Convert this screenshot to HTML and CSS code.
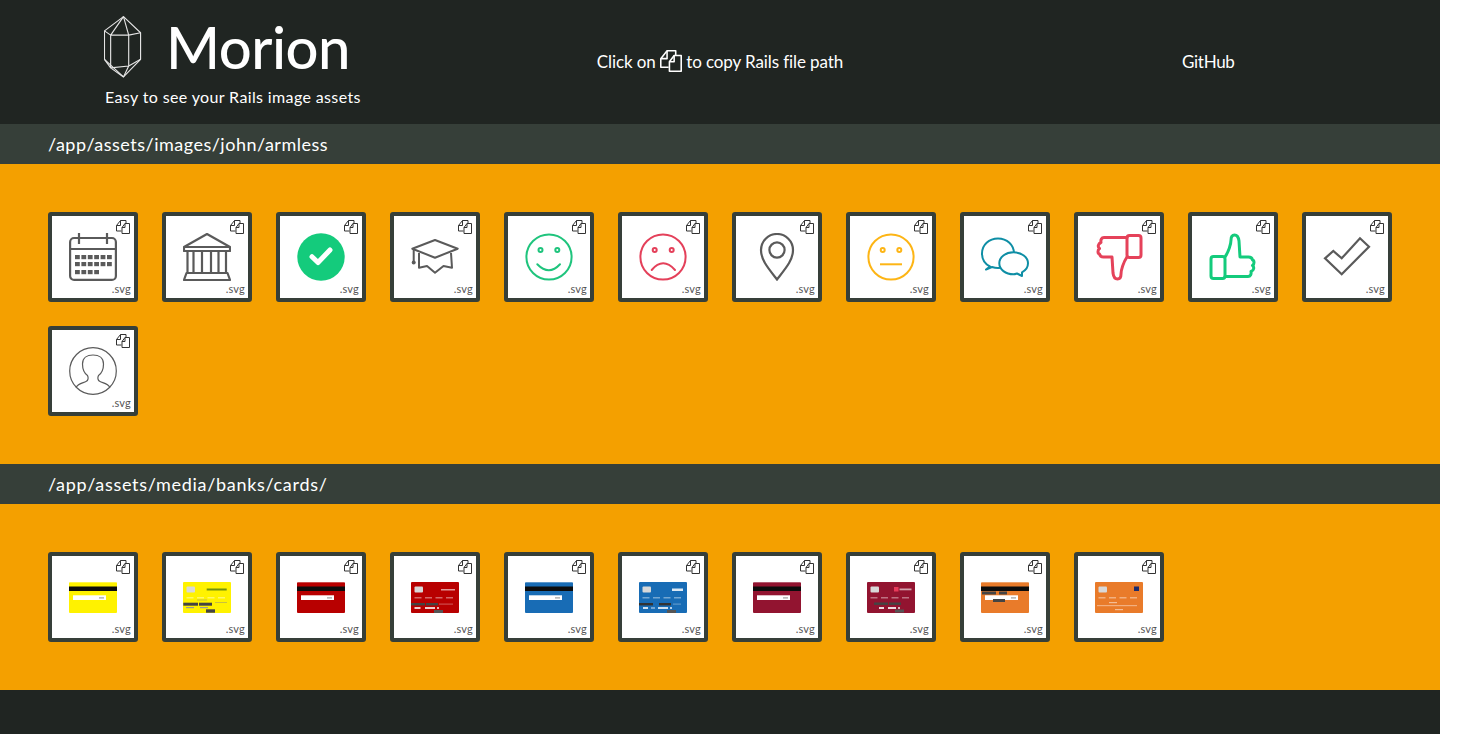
FILE: index.html
```html
<!DOCTYPE html>
<html lang="en">
<head>
<meta charset="utf-8">
<title>Morion</title>
<link rel="stylesheet" href="styles.css">
</head>
<body>
<svg class="sprite" xmlns="http://www.w3.org/2000/svg">
  <symbol id="i-copy" viewBox="0 0 14 14">
    <g fill="none" stroke="currentColor" stroke-width="1" stroke-linejoin="round">
      <path d="M5.5 11H.5V5.5L4.5.5H10V3.5"/>
      <path d="M4.5.5V5.5H.5"/>
      <path d="M6 7.5L9 3.5H13.5V13.5H6Z"/>
      <path d="M9 3.5V7.5H6"/>
    </g>
  </symbol>
  <symbol id="i-cal" viewBox="0 0 48 48">
    <g fill="none" stroke="#5a5a5a" stroke-width="2.2">
      <rect x="1.100" y="5" width="45.800" height="41.900" rx="4"/>
      <path d="M1 16H47M10 0V11M38 0V11"/>
    </g>
    <g fill="#5a5a5a">
      <rect x="6" y="22" width="4.800" height="4.200"/><rect x="12.400" y="22" width="4.800" height="4.200"/><rect x="18.800" y="22" width="4.800" height="4.200"/><rect x="25.200" y="22" width="4.800" height="4.200"/><rect x="31.600" y="22" width="4.800" height="4.200"/><rect x="38" y="22" width="4.800" height="4.200"/>
      <rect x="6" y="29" width="4.800" height="4.200"/><rect x="12.400" y="29" width="4.800" height="4.200"/><rect x="18.800" y="29" width="4.800" height="4.200"/><rect x="25.200" y="29" width="4.800" height="4.200"/><rect x="31.600" y="29" width="4.800" height="4.200"/><rect x="38" y="29" width="4.800" height="4.200"/>
      <rect x="6" y="37" width="4.800" height="4.200"/><rect x="12.400" y="37" width="4.800" height="4.200"/><rect x="18.800" y="37" width="4.800" height="4.200"/><rect x="25.200" y="37" width="4.800" height="4.200"/>
    </g>
  </symbol>
  <symbol id="i-bank" viewBox="0 0 48 48">
    <g fill="none" stroke="#5a5a5a" stroke-width="2.200" stroke-linejoin="round">
      <path d="M24 1L1 14V18H47V14Z"/>
      <path d="M1 14H47"/>
      <path d="M4.500 18V40M10.500 18V40M19 18V40M28 18V40M35.500 18V40M43 18V40"/>
      <path d="M3.500 40H44.500L47 47H1Z"/>
    </g>
  </symbol>
  <symbol id="i-ok" viewBox="0 0 48 48">
    <circle cx="24" cy="24" r="23.700" fill="#14cb7c"/>
    <path d="M15 23.700L21 29.500L33 17" fill="none" stroke="#fff" stroke-width="5" stroke-linecap="round" stroke-linejoin="round"/>
  </symbol>
  <symbol id="i-cap" viewBox="0 0 48 48">
    <g fill="none" stroke="#5a5a5a" stroke-width="2" stroke-linejoin="round">
      <path d="M1.300 15.700L24 7L46.700 15.700L24 24.700Z"/>
      <path d="M8 20V34.700L16 33L24 39.700L32.500 33L41 34.700L40 20"/>
      <path d="M2.700 16V29"/>
    </g>
    <circle cx="2.700" cy="29.500" r="2" fill="#5a5a5a"/>
  </symbol>
  <symbol id="i-smile" viewBox="0 0 48 48">
    <g fill="none" stroke="#1fc47d" stroke-width="2">
      <circle cx="24" cy="24" r="22.600"/>
      <circle cx="15.500" cy="17" r="2"/>
      <circle cx="32.300" cy="17" r="2"/>
      <path d="M12.300 31.300Q24 43.300 35 31.300" stroke-linecap="round"/>
    </g>
  </symbol>
  <symbol id="i-sad" viewBox="0 0 48 48">
    <g fill="none" stroke="#e4405a" stroke-width="2">
      <circle cx="24" cy="24" r="22.600"/>
      <circle cx="15.700" cy="17" r="2"/>
      <circle cx="32.700" cy="17" r="2"/>
      <path d="M12.700 37Q24 23.600 36 37" stroke-linecap="round"/>
    </g>
  </symbol>
  <symbol id="i-pin" viewBox="0 0 48 48">
    <g fill="none" stroke="#5a5a5a" stroke-width="2.200">
      <path d="M24 46.500C15 35 8 27 8 17A16 16 0 0 1 40 17C40 27 33 35 24 46.500Z"/>
      <circle cx="24" cy="17" r="7.600"/>
    </g>
  </symbol>
  <symbol id="i-neutral" viewBox="0 0 48 48">
    <g fill="none" stroke="#fdb515" stroke-width="2">
      <circle cx="24" cy="24" r="22.600"/>
      <circle cx="15.700" cy="17" r="2"/>
      <circle cx="32.300" cy="17" r="2"/>
      <path d="M13 31.300H35"/>
    </g>
  </symbol>
  <symbol id="i-chat" viewBox="0 0 48 48">
    <g fill="#fff" stroke="#0e8ea5" stroke-width="2" stroke-linejoin="round">
      <path d="M9 33.500C4 31 1 26 1 20.500C1 12 8 5.500 17 5.500S33 12 33 20.500S26 35 17 35C14.500 35 12.500 34.500 11 34L5 36.500Z"/>
      <path d="M36 40.500C34.500 41 33.500 41.300 32.500 41.300C24.500 41.300 18.300 36.500 18.300 30.300S24.500 19.300 32.500 19.300S47 24.300 47 30.300C47 34.500 44.500 37.500 41 39.300L41 43Z"/>
    </g>
  </symbol>
  <symbol id="i-down" viewBox="0 0 48 48">
    <g fill="none" stroke="#e5425a" stroke-width="3" stroke-linejoin="round" stroke-linecap="round">
      <path d="M32 4.500H9C6.500 4.500 5.500 7 6 9.500C3 10.500 2.500 14 4.500 15.500C2.500 17 2.500 20.500 4.500 21C5 23.500 6.500 24 8.500 24H17L18 40C18.500 44 20 46 22.500 46C25 46 26 44 26 41C26 37 28.500 29 32 24"/>
      <rect x="32" y="2.500" width="14" height="22" rx="2.500"/>
    </g>
  </symbol>
  <symbol id="i-up" viewBox="0 0 48 48">
    <g fill="none" stroke="#14cb7c" stroke-width="3" stroke-linejoin="round" stroke-linecap="round" transform="rotate(180 24 24)">
      <path d="M32 4.500H9C6.500 4.500 5.500 7 6 9.500C3 10.500 2.500 14 4.500 15.500C2.500 17 2.500 20.500 4.500 21C5 23.500 6.500 24 8.500 24H17L18 40C18.500 44 20 46 22.500 46C25 46 26 44 26 41C26 37 28.500 29 32 24"/>
      <rect x="32" y="2.500" width="14" height="22" rx="2.500"/>
    </g>
  </symbol>
  <symbol id="i-check" viewBox="0 0 48 48">
    <path d="M2 25.300L10.300 18L18.700 25.300L37 5.300L46 13.700L18.700 41.300Z" fill="none" stroke="#5a5a5a" stroke-width="2.200"/>
  </symbol>
  <symbol id="i-user" viewBox="0 0 48 48">
    <g fill="none" stroke="#5a5a5a" stroke-width="1.200">
      <circle cx="24" cy="24" r="23.300"/>
      <path d="M7 40.500C9 36.500 14 36 17 34.500C19.500 33.500 19.500 30.500 18.500 28.500C15 26 13.500 21 13.500 17C13.500 11 18 8 24 8C30 8 34.500 11 34.500 17C34.500 21 33 26 29.500 28.500C28.500 30.500 28.500 33.500 31 34.500C34 36 39 36.500 41 40.500"/>
    </g>
  </symbol>
  <symbol id="c-back" viewBox="0 0 48 31">
    <rect width="48" height="31" rx="1" fill="currentColor"/>
    <rect width="48" height="1" fill="#fff" opacity=".3"/>
    <rect y="4.500" width="48" height="4.500" fill="#0c0c0c"/>
    <rect x="4" y="13.300" width="33" height="4.700" fill="#fff"/>
    <rect x="30" y="15" width="5" height="1.700" fill="#bbb"/>
  </symbol>
  <symbol id="c-front" viewBox="0 0 48 31">
    <rect width="48" height="31" rx="1" fill="currentColor"/>
    <rect x="3.500" y="4.500" width="8.500" height="6" rx="1" fill="#d8d8d8"/>
    <g fill="#fff" opacity=".4">
      <rect x="3.500" y="15" width="7" height="1.500"/><rect x="14" y="15" width="7" height="1.500"/><rect x="24.500" y="15" width="7" height="1.500"/><rect x="35" y="15" width="7" height="1.500"/>
    </g>
  </symbol>
</svg>

<div class="page">
  <header class="header">
    <div class="brand">
      <div class="brand-top">
        <svg class="crystal" viewBox="0 0 40 66" xmlns="http://www.w3.org/2000/svg">
          <g fill="none" stroke="#e4e4e4" stroke-width="1.200" stroke-linejoin="round">
            <path d="M20.500 1L38.500 18V46L20.500 64.500L.5 46V16Z"/>
            <path d="M.5 16L7 20.500H26L38.500 18M7 20.500L20.500 1M26 20.500L20.500 1M7 20.500V55L20.500 64.500M26 20.500V53L20.500 64.500M.5 46L7 55L26 53L38.500 46"/>
          </g>
        </svg>
        <h1 class="title">Morion</h1>
      </div>
      <p class="tagline">Easy to see your Rails image assets</p>
    </div>
    <div class="hint">Click on <svg class="hint-icon"><use href="#i-copy"/></svg> to copy Rails file path</div>
    <a class="github">GitHub</a>
  </header>

  <section>
    <h2 class="path path-images">/app/assets/images/john/armless</h2>
    <div class="grid">
      <div class="tile"><svg class="copy"><use href="#i-copy"/></svg><svg class="icon"><use href="#i-cal"/></svg><span class="ext">.svg</span></div>
      <div class="tile"><svg class="copy"><use href="#i-copy"/></svg><svg class="icon"><use href="#i-bank"/></svg><span class="ext">.svg</span></div>
      <div class="tile"><svg class="copy"><use href="#i-copy"/></svg><svg class="icon"><use href="#i-ok"/></svg><span class="ext">.svg</span></div>
      <div class="tile"><svg class="copy"><use href="#i-copy"/></svg><svg class="icon"><use href="#i-cap"/></svg><span class="ext">.svg</span></div>
      <div class="tile"><svg class="copy"><use href="#i-copy"/></svg><svg class="icon"><use href="#i-smile"/></svg><span class="ext">.svg</span></div>
      <div class="tile"><svg class="copy"><use href="#i-copy"/></svg><svg class="icon"><use href="#i-sad"/></svg><span class="ext">.svg</span></div>
      <div class="tile"><svg class="copy"><use href="#i-copy"/></svg><svg class="icon"><use href="#i-pin"/></svg><span class="ext">.svg</span></div>
      <div class="tile"><svg class="copy"><use href="#i-copy"/></svg><svg class="icon"><use href="#i-neutral"/></svg><span class="ext">.svg</span></div>
      <div class="tile"><svg class="copy"><use href="#i-copy"/></svg><svg class="icon"><use href="#i-chat"/></svg><span class="ext">.svg</span></div>
      <div class="tile"><svg class="copy"><use href="#i-copy"/></svg><svg class="icon"><use href="#i-down"/></svg><span class="ext">.svg</span></div>
      <div class="tile"><svg class="copy"><use href="#i-copy"/></svg><svg class="icon"><use href="#i-up"/></svg><span class="ext">.svg</span></div>
      <div class="tile"><svg class="copy"><use href="#i-copy"/></svg><svg class="icon"><use href="#i-check"/></svg><span class="ext">.svg</span></div>
      <div class="tile"><svg class="copy"><use href="#i-copy"/></svg><svg class="icon"><use href="#i-user"/></svg><span class="ext">.svg</span></div>
    </div>
  </section>

  <section>
    <h2 class="path path-media">/app/assets/media/banks/cards/</h2>
    <div class="grid">
      <div class="tile"><svg class="copy"><use href="#i-copy"/></svg><svg class="card yellow" viewBox="0 0 48 31"><use href="#c-back"/></svg><span class="ext">.svg</span></div>
      <div class="tile"><svg class="copy"><use href="#i-copy"/></svg>
        <svg class="card yellow" viewBox="0 0 48 31"><use href="#c-front"/>
          <rect x="23.700" y="6.500" width="20" height="2" fill="#4f7a10" opacity=".8"/>
          <rect x="14" y="17.500" width="10" height="1" fill="#c8c040"/><rect x="32" y="20" width="12" height="1" fill="#c8c040"/>
          <rect x=".3" y="20.700" width="14.700" height="3" fill="#444"/><rect x="16" y="20.700" width="13" height="3" fill="#444"/>
          <rect x="3" y="25" width="8" height="1.200" fill="#999"/><rect x="17" y="25" width="8" height="1.200" fill="#999"/>
          <rect x="23" y="27.300" width="9" height="3.400" fill="#444"/>
        </svg><span class="ext">.svg</span></div>
      <div class="tile"><svg class="copy"><use href="#i-copy"/></svg><svg class="card red" viewBox="0 0 48 31"><use href="#c-back"/></svg><span class="ext">.svg</span></div>
      <div class="tile"><svg class="copy"><use href="#i-copy"/></svg>
        <svg class="card red" viewBox="0 0 48 31"><use href="#c-front"/>
          <rect x="30" y="7" width="14" height="1.500" fill="#fff" opacity=".6"/>
          <rect x="0" y="21" width="14" height="2.400" fill="#444"/><rect x="15" y="21" width="12" height="2.400" fill="#444"/><rect x="28" y="21.500" width="14" height="1.200" fill="#fff" opacity=".3"/>
          <rect x="3.500" y="25" width="6" height="2" fill="#fff" opacity=".8"/><rect x="14" y="25" width="10" height="2" fill="#fff" opacity=".8"/><rect x="26" y="25" width="2" height="2" fill="#fff" opacity=".7"/>
          <rect x="23" y="28" width="9" height="3" fill="#555"/>
        </svg><span class="ext">.svg</span></div>
      <div class="tile"><svg class="copy"><use href="#i-copy"/></svg><svg class="card blue" viewBox="0 0 48 31"><use href="#c-back"/></svg><span class="ext">.svg</span></div>
      <div class="tile"><svg class="copy"><use href="#i-copy"/></svg>
        <svg class="card blue" viewBox="0 0 48 31"><use href="#c-front"/>
          <rect x="33" y="6.500" width="11" height="2.500" fill="#fff" opacity=".85"/>
          <rect x="0" y="21" width="14" height="2.400" fill="#333"/><rect x="20" y="21" width="12" height="2.400" fill="#333"/><rect x="34" y="21.500" width="8" height="1.200" fill="#fff" opacity=".3"/>
          <rect x="4" y="25" width="5" height="2" fill="#fff" opacity=".8"/><rect x="12" y="25" width="4" height="2" fill="#fff" opacity=".4"/><rect x="19" y="25" width="10" height="2" fill="#fff" opacity=".8"/><rect x="31" y="25" width="2" height="2" fill="#fff" opacity=".7"/>
          <rect x="28" y="28" width="9" height="3" fill="#555"/>
        </svg><span class="ext">.svg</span></div>
      <div class="tile"><svg class="copy"><use href="#i-copy"/></svg><svg class="card crimson" viewBox="0 0 48 31"><use href="#c-back"/></svg><span class="ext">.svg</span></div>
      <div class="tile"><svg class="copy"><use href="#i-copy"/></svg>
        <svg class="card crimson" viewBox="0 0 48 31"><use href="#c-front"/>
          <rect x="27" y="5" width="4.500" height="4.500" fill="#e83a5a"/><rect x="32.500" y="6.500" width="12" height="1.800" fill="#fff" opacity=".6"/>
          <rect x="7" y="20.500" width="14" height="2.400" fill="#444"/><rect x="22" y="20.500" width="12" height="2.400" fill="#444"/>
          <rect x="12" y="25" width="5" height="2" fill="#fff" opacity=".85"/><rect x="21" y="25" width="8" height="2" fill="#fff" opacity=".85"/><rect x="31" y="25" width="2" height="2" fill="#fff" opacity=".7"/>
          <rect x="28" y="27.500" width="9" height="3" fill="#555"/>
        </svg><span class="ext">.svg</span></div>
      <div class="tile"><svg class="copy"><use href="#i-copy"/></svg>
        <svg class="card orange" viewBox="0 0 48 31"><use href="#c-back"/>
          <rect x="1" y="9.500" width="14" height="3" fill="#444"/><rect x="18" y="9.500" width="8" height="3" fill="#444"/>
          <rect x="12" y="17" width="12" height="3" fill="#444"/>
        </svg><span class="ext">.svg</span></div>
      <div class="tile"><svg class="copy"><use href="#i-copy"/></svg>
        <svg class="card orange" viewBox="0 0 48 31"><use href="#c-front"/>
          <rect x="39" y="4.500" width="5" height="4.500" fill="#1c2a6a"/>
          <rect x="14" y="20" width="8" height="1.200" fill="#fff" opacity=".5"/>
          <rect x="2" y="23" width="40" height="1.200" fill="#fff" opacity=".4"/>
          <rect x="20" y="27" width="8" height="1.200" fill="#fff" opacity=".5"/>
        </svg><span class="ext">.svg</span></div>
    </div>
  </section>
</div>
</body>
</html>
```
FILE: styles.css
```css
* { box-sizing: border-box; }
html, body { margin: 0; background: #fff; }
body { font-family: Lato, "Open Sans", sans-serif; }
.sprite { display: none; }
.page { width: 1440px; min-height: 734px; background: #202522; }

.header {
  height: 124px;
  display: grid;
  grid-template-columns: 480px 480px 480px;
  align-items: start;
  color: #fff;
}
.brand { padding: 15px 0 0 104px; }
.brand-top { display: flex; align-items: flex-start; gap: 24px; height: 64px; }
.crystal { width: 38px; height: 64px; flex: none; }
.title {
  margin: 0;
  font-size: 58px;
  line-height: 64px;
  font-weight: 500;
  letter-spacing: -.5px;
}
.tagline { margin: 8px 0 0 1px; font-size: 16px; line-height: 20px; letter-spacing: .37px; white-space: nowrap; }
.hint {
  margin-top: 50px;
  font-size: 17px;
  line-height: 24px;
  letter-spacing: -.1px;
  text-align: center;
  white-space: nowrap;
}
.hint-icon { width: 22px; height: 22px; vertical-align: -4px; }
.github { margin: 50px 0 0 222px; font-size: 17px; line-height: 24px; letter-spacing: -.3px; }

.path {
  margin: 0;
  height: 40px;
  padding-left: 48px;
  background: #363f39;
  color: #fff;
  font-size: 18px;
  line-height: 40px;
  font-weight: 400;
}
.path-images { letter-spacing: .5px; }
.path-media { letter-spacing: .7px; }
.grid {
  display: flex;
  flex-wrap: wrap;
  gap: 24px;
  padding: 48px;
  background: #f4a000;
}
.tile {
  position: relative;
  width: 90px;
  height: 90px;
  border: 4px solid #363f39;
  border-radius: 3px;
  background: #fff;
  display: flex;
  align-items: center;
  justify-content: center;
}
.copy {
  position: absolute;
  top: 4px;
  right: 4px;
  width: 14px;
  height: 14px;
  color: #333;
}
.icon { width: 48px; height: 48px; }
.card { width: 48px; height: 31px; }
.ext {
  position: absolute;
  right: 3px;
  bottom: 2px;
  font-size: 11px;
  line-height: 14px;
  color: #555;
  letter-spacing: .2px;
}
.yellow { color: #fff200; }
.red { color: #b80000; }
.blue { color: #186cb5; }
.crimson { color: #921430; }
.orange { color: #e97b2a; }
```
